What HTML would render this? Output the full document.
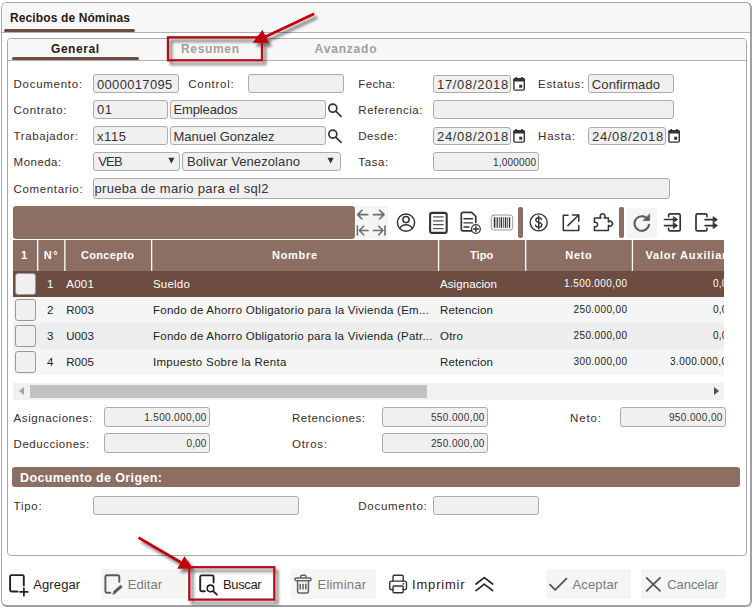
<!DOCTYPE html>
<html><head><meta charset="utf-8"><title>Recibos de Nóminas</title>
<style>
html,body{margin:0;padding:0;}
body{width:754px;height:609px;position:relative;overflow:hidden;background:#fff;font-family:"Liberation Sans",sans-serif;}
.a{position:absolute;box-sizing:border-box;}
.t{position:absolute;white-space:pre;font-family:"Liberation Sans",sans-serif;}
.in{position:absolute;box-sizing:border-box;background:#f0f0f0;border:1px solid #ababab;border-radius:3px;}
.btn{position:absolute;box-sizing:border-box;background:#f5f5f5;border-radius:2px;}
svg{position:absolute;overflow:visible;}
.vd{position:absolute;top:240px;width:2px;height:31px;background:#fff;}

</style></head>
<body>
<!-- outer window -->
<div class="a" style="left:1px;top:2px;width:751px;height:605px;border:1px solid #a8a8a8;border-right:2px solid #a0a0a0;border-bottom:2px solid #a0a0a0;border-radius:6px;background:#fff;"></div>
<div class="a" style="left:2px;top:3px;width:748px;height:29px;background:#f7f7f7;border-radius:5px 5px 0 0;"></div>
<div class="a" style="left:2px;top:32px;width:748px;height:1px;background:#b0b0b0;"></div>
<div class="a" style="left:4px;top:29px;width:131px;height:3px;background:#6d4c41;border-radius:2px;"></div>
<!-- inner panel -->
<div class="a" style="left:7px;top:38px;width:740px;height:518px;border:1px solid #a8a8a8;border-radius:4px;background:#fff;"></div>
<div class="a" style="left:8px;top:39px;width:738px;height:21px;background:#f7f7f7;border-radius:3px 3px 0 0;"></div>
<div class="a" style="left:8px;top:60px;width:738px;height:1px;background:#b0b0b0;"></div>
<div class="a" style="left:12px;top:57px;width:127px;height:3px;background:#6d4c41;border-radius:2px;"></div>

<!-- inputs row1 -->
<div class="in" style="left:93px;top:74px;width:86px;height:19px;"></div>
<div class="in" style="left:248px;top:74px;width:96px;height:19px;"></div>
<div class="in" style="left:433px;top:75px;width:78px;height:18px;"></div>
<div class="in" style="left:588px;top:74px;width:86px;height:19px;"></div>
<!-- row2 -->
<div class="in" style="left:93px;top:100px;width:75px;height:19px;"></div>
<div class="in" style="left:170px;top:100px;width:156px;height:19px;"></div>
<div class="in" style="left:433px;top:100px;width:241px;height:19px;"></div>
<!-- row3 -->
<div class="in" style="left:93px;top:126px;width:75px;height:19px;"></div>
<div class="in" style="left:170px;top:126px;width:156px;height:19px;"></div>
<div class="in" style="left:433px;top:127px;width:78px;height:18px;"></div>
<div class="in" style="left:588px;top:127px;width:78px;height:18px;"></div>
<!-- row4 -->
<div class="in" style="left:93px;top:152px;width:87px;height:19px;"></div>
<div class="in" style="left:182px;top:152px;width:159px;height:19px;"></div>
<div class="in" style="left:433px;top:152px;width:106px;height:19px;"></div>
<!-- row5 -->
<div class="in" style="left:93px;top:178px;width:577px;height:21px;"></div>

<!-- toolbar bar -->
<div class="a" style="left:13px;top:206px;width:342px;height:33px;background:#8d6e63;border-radius:3px;"></div>
<div class="a" style="left:356px;top:206px;width:32px;height:33px;background:#f5f5f5;"></div>
<div class="a" style="left:518px;top:207px;width:5px;height:31px;background:#8d6e63;border-radius:2px;"></div>
<div class="a" style="left:619px;top:207px;width:5px;height:31px;background:#8d6e63;border-radius:2px;"></div>
<div class="a" style="left:627px;top:208px;width:30px;height:30px;background:#f5f5f5;border-radius:2px;"></div>

<!-- table -->
<div class="a" style="left:13px;top:240px;width:711px;height:31px;background:#8d6e63;"></div>
<div class="a" style="left:13px;top:271px;width:711px;height:26px;background:#6d4c41;"></div>
<div class="a" style="left:13px;top:297px;width:711px;height:26px;background:#f5f5f5;"></div>
<div class="a" style="left:13px;top:323px;width:711px;height:26px;background:#eeeeee;"></div>
<div class="a" style="left:13px;top:349px;width:711px;height:26px;background:#f5f5f5;"></div>
<!-- checkboxes -->
<div class="in" style="left:15px;top:273px;width:21px;height:22px;border-color:#999;"></div>
<div class="in" style="left:15px;top:299px;width:21px;height:22px;border-color:#999;"></div>
<div class="in" style="left:15px;top:325px;width:21px;height:22px;border-color:#999;"></div>
<div class="in" style="left:15px;top:351px;width:21px;height:22px;border-color:#999;"></div>
<!-- scrollbar -->
<div class="a" style="left:13px;top:383px;width:711px;height:17px;background:#f1f1f1;"></div>
<div class="a" style="left:30px;top:385px;width:397px;height:13px;background:#c1c1c1;"></div>
<div class="a" style="left:19px;top:387px;width:0;height:0;border:4px solid transparent;border-right:5px solid #a3a3a3;border-left:0;"></div>
<div class="a" style="left:714px;top:387px;width:0;height:0;border:4px solid transparent;border-left:5px solid #505050;border-right:0;"></div>

<!-- totals -->
<div class="in" style="left:104px;top:407px;width:106px;height:20px;"></div>
<div class="in" style="left:104px;top:433px;width:106px;height:20px;"></div>
<div class="in" style="left:382px;top:407px;width:106px;height:20px;"></div>
<div class="in" style="left:382px;top:433px;width:106px;height:20px;"></div>
<div class="in" style="left:620px;top:407px;width:106px;height:20px;"></div>

<!-- section header -->
<div class="a" style="left:12px;top:467px;width:728px;height:20px;background:#8d6e63;border-radius:3px;"></div>
<div class="in" style="left:93px;top:496px;width:206px;height:19px;"></div>
<div class="in" style="left:433px;top:496px;width:106px;height:19px;"></div>

<!-- buttons -->
<div class="btn" style="left:101px;top:569px;width:85px;height:30px;"></div>
<div class="btn" style="left:291px;top:569px;width:85px;height:30px;"></div>
<div class="btn" style="left:546px;top:569px;width:85px;height:30px;"></div>
<div class="btn" style="left:641px;top:569px;width:85px;height:30px;"></div>


<div class="t" style="top:11px;font-size:12px;line-height:15px;color:#2b1a14;letter-spacing:0.116px;font-weight:bold;left:10px;">Recibos de Nóminas</div>
<div class="t" style="top:42px;font-size:12px;line-height:15px;color:#2b1a14;letter-spacing:0.549px;font-weight:bold;left:51px;">General</div>
<div class="t" style="top:42px;font-size:12px;line-height:15px;color:#a59e9e;letter-spacing:0.661px;font-weight:bold;left:181px;">Resumen</div>
<div class="t" style="top:42px;font-size:12px;line-height:15px;color:#a59e9e;letter-spacing:0.824px;font-weight:bold;left:314.6px;">Avanzado</div>
<div class="t" style="top:77px;font-size:11.5px;line-height:14px;color:#3b2b2b;letter-spacing:0.72px;left:13.6px;">Documento:</div>
<div class="t" style="top:77px;font-size:11.5px;line-height:14px;color:#3b2b2b;letter-spacing:0.731px;left:188.3px;">Control:</div>
<div class="t" style="top:77px;font-size:11.5px;line-height:14px;color:#3b2b2b;letter-spacing:0.366px;left:358.3px;">Fecha:</div>
<div class="t" style="top:77px;font-size:11.5px;line-height:14px;color:#3b2b2b;letter-spacing:0.648px;left:538.1px;">Estatus:</div>
<div class="t" style="top:103px;font-size:11.5px;line-height:14px;color:#3b2b2b;letter-spacing:0.698px;left:13.6px;">Contrato:</div>
<div class="t" style="top:103px;font-size:11.5px;line-height:14px;color:#3b2b2b;letter-spacing:0.539px;left:358.3px;">Referencia:</div>
<div class="t" style="top:129px;font-size:11.5px;line-height:14px;color:#3b2b2b;letter-spacing:0.601px;left:13.6px;">Trabajador:</div>
<div class="t" style="top:129px;font-size:11.5px;line-height:14px;color:#3b2b2b;letter-spacing:0.512px;left:358.3px;">Desde:</div>
<div class="t" style="top:129px;font-size:11.5px;line-height:14px;color:#3b2b2b;letter-spacing:0.75px;left:538.1px;">Hasta:</div>
<div class="t" style="top:155px;font-size:11.5px;line-height:14px;color:#3b2b2b;letter-spacing:0.472px;left:13.6px;">Moneda:</div>
<div class="t" style="top:155px;font-size:11.5px;line-height:14px;color:#3b2b2b;letter-spacing:0.625px;left:358.3px;">Tasa:</div>
<div class="t" style="top:182px;font-size:11.5px;line-height:14px;color:#3b2b2b;letter-spacing:0.636px;left:13.6px;">Comentario:</div>
<div class="t" style="top:77px;font-size:13px;line-height:16px;color:#333;letter-spacing:0.332px;left:97px;">0000017095</div>
<div class="t" style="top:77px;font-size:13px;line-height:16px;color:#333;letter-spacing:0.68px;left:437px;">17/08/2018</div>
<div class="t" style="top:77px;font-size:13px;line-height:16px;color:#333;letter-spacing:0.111px;left:591.8px;">Confirmado</div>
<div class="t" style="top:102px;font-size:13px;line-height:16px;color:#333;letter-spacing:0.531px;left:97px;">01</div>
<div class="t" style="top:102px;font-size:13px;line-height:16px;color:#333;letter-spacing:-0.131px;left:173.5px;">Empleados</div>
<div class="t" style="top:129px;font-size:13px;line-height:16px;color:#333;letter-spacing:0.589px;left:97px;">x115</div>
<div class="t" style="top:129px;font-size:13px;line-height:16px;color:#333;letter-spacing:-0.012px;left:173.5px;">Manuel Gonzalez</div>
<div class="t" style="top:129px;font-size:13px;line-height:16px;color:#333;letter-spacing:0.68px;left:437px;">24/08/2018</div>
<div class="t" style="top:129px;font-size:13px;line-height:16px;color:#333;letter-spacing:0.68px;left:592px;">24/08/2018</div>
<div class="t" style="top:154px;font-size:13px;line-height:16px;color:#333;letter-spacing:-0.758px;left:98.2px;">VEB</div>
<div class="t" style="top:154px;font-size:13px;line-height:16px;color:#333;letter-spacing:0.099px;left:187px;">Bolivar Venezolano</div>
<div class="t" style="top:157px;font-size:10px;line-height:12px;color:#333;letter-spacing:0.183px;right:217.82px;">1,000000</div>
<div class="t" style="top:181px;font-size:13px;line-height:16px;color:#333;letter-spacing:0.315px;left:94.5px;">prueba de mario para el sql2</div>
<div class="t" style="top:248px;font-size:11px;line-height:14px;color:#fff;letter-spacing:0px;font-weight:bold;left:20.9px;">1</div>
<div class="t" style="top:248px;font-size:11px;line-height:14px;color:#fff;letter-spacing:1.556px;font-weight:bold;left:43.8px;">N°</div>
<div class="t" style="top:248px;font-size:11px;line-height:14px;color:#fff;letter-spacing:0.309px;font-weight:bold;left:81px;">Concepto</div>
<div class="t" style="top:248px;font-size:11px;line-height:14px;color:#fff;letter-spacing:0.688px;font-weight:bold;left:272px;">Nombre</div>
<div class="t" style="top:248px;font-size:11px;line-height:14px;color:#fff;letter-spacing:0.061px;font-weight:bold;left:470px;">Tipo</div>
<div class="t" style="top:248px;font-size:11px;line-height:14px;color:#fff;letter-spacing:0.682px;font-weight:bold;left:565.3px;">Neto</div>
<div class="t" style="top:248px;font-size:11px;line-height:14px;color:#fff;letter-spacing:0.853px;font-weight:bold;left:645.4px;">Valor Auxiliar</div>
<div class="t" style="top:277px;font-size:11.5px;line-height:14px;color:#fff;letter-spacing:0px;right:700.50px;">1</div>
<div class="t" style="top:277px;font-size:11.5px;line-height:14px;color:#fff;letter-spacing:0.214px;left:66.3px;">A001</div>
<div class="t" style="top:277px;font-size:11.5px;line-height:14px;color:#fff;letter-spacing:0.197px;left:153px;">Sueldo</div>
<div class="t" style="top:277px;font-size:11.5px;line-height:14px;color:#fff;letter-spacing:0.082px;left:440px;">Asignacion</div>
<div class="t" style="top:278px;font-size:10px;line-height:12px;color:#fff;letter-spacing:0.419px;right:126.58px;">1.500.000,00</div>
<div class="t" style="top:278px;font-size:10px;line-height:12px;color:#fff;letter-spacing:0.177px;right:20.82px;">0,00</div>
<div class="t" style="top:303px;font-size:11.5px;line-height:14px;color:#222;letter-spacing:0px;right:700.50px;">2</div>
<div class="t" style="top:303px;font-size:11.5px;line-height:14px;color:#222;letter-spacing:0.0px;left:66.3px;">R003</div>
<div class="t" style="top:303px;font-size:11.5px;line-height:14px;color:#222;letter-spacing:0.244px;left:153px;">Fondo de Ahorro Obligatorio para la Vivienda (Em...</div>
<div class="t" style="top:303px;font-size:11.5px;line-height:14px;color:#222;letter-spacing:0.15px;left:440px;">Retencion</div>
<div class="t" style="top:304px;font-size:10px;line-height:12px;color:#222;letter-spacing:0.382px;right:126.62px;">250.000,00</div>
<div class="t" style="top:304px;font-size:10px;line-height:12px;color:#222;letter-spacing:0.177px;right:20.82px;">0,00</div>
<div class="t" style="top:329px;font-size:11.5px;line-height:14px;color:#222;letter-spacing:0px;right:700.50px;">3</div>
<div class="t" style="top:329px;font-size:11.5px;line-height:14px;color:#222;letter-spacing:0.0px;left:66.3px;">U003</div>
<div class="t" style="top:329px;font-size:11.5px;line-height:14px;color:#222;letter-spacing:0.24px;left:153px;">Fondo de Ahorro Obligatorio para la Vivienda (Patr...</div>
<div class="t" style="top:329px;font-size:11.5px;line-height:14px;color:#222;letter-spacing:0.208px;left:440px;">Otro</div>
<div class="t" style="top:330px;font-size:10px;line-height:12px;color:#222;letter-spacing:0.382px;right:126.62px;">250.000,00</div>
<div class="t" style="top:330px;font-size:10px;line-height:12px;color:#222;letter-spacing:0.177px;right:20.82px;">0,00</div>
<div class="t" style="top:355px;font-size:11.5px;line-height:14px;color:#222;letter-spacing:0px;right:700.50px;">4</div>
<div class="t" style="top:355px;font-size:11.5px;line-height:14px;color:#222;letter-spacing:0.0px;left:66.3px;">R005</div>
<div class="t" style="top:355px;font-size:11.5px;line-height:14px;color:#222;letter-spacing:0.276px;left:153px;">Impuesto Sobre la Renta</div>
<div class="t" style="top:355px;font-size:11.5px;line-height:14px;color:#222;letter-spacing:0.15px;left:440px;">Retencion</div>
<div class="t" style="top:356px;font-size:10px;line-height:12px;color:#222;letter-spacing:0.382px;right:126.62px;">300.000,00</div>
<div class="t" style="top:356px;font-size:10px;line-height:12px;color:#222;letter-spacing:0.419px;right:20.58px;">3.000.000,00</div>
<div class="t" style="top:411px;font-size:11.5px;line-height:14px;color:#3b2b2b;letter-spacing:0.574px;left:13.6px;">Asignaciones:</div>
<div class="t" style="top:437px;font-size:11.5px;line-height:14px;color:#3b2b2b;letter-spacing:0.528px;left:13.6px;">Deducciones:</div>
<div class="t" style="top:411px;font-size:11.5px;line-height:14px;color:#3b2b2b;letter-spacing:0.534px;left:292px;">Retenciones:</div>
<div class="t" style="top:437px;font-size:11.5px;line-height:14px;color:#3b2b2b;letter-spacing:0.738px;left:292px;">Otros:</div>
<div class="t" style="top:411px;font-size:11.5px;line-height:14px;color:#3b2b2b;letter-spacing:0.875px;left:570px;">Neto:</div>
<div class="t" style="top:412px;font-size:10px;line-height:12px;color:#333;letter-spacing:0.346px;right:547.25px;">1.500.000,00</div>
<div class="t" style="top:438px;font-size:10px;line-height:12px;color:#333;letter-spacing:0.177px;right:547.42px;">0,00</div>
<div class="t" style="top:412px;font-size:10px;line-height:12px;color:#333;letter-spacing:0.382px;right:269.22px;">550.000,00</div>
<div class="t" style="top:438px;font-size:10px;line-height:12px;color:#333;letter-spacing:0.382px;right:269.22px;">250.000,00</div>
<div class="t" style="top:412px;font-size:10px;line-height:12px;color:#333;letter-spacing:0.382px;right:31.22px;">950.000,00</div>
<div class="t" style="top:470px;font-size:12.5px;line-height:16px;color:#fff;letter-spacing:0.382px;font-weight:bold;left:20px;">Documento de Origen:</div>
<div class="t" style="top:499px;font-size:11.5px;line-height:14px;color:#3b2b2b;letter-spacing:0.715px;left:13.6px;">Tipo:</div>
<div class="t" style="top:499px;font-size:11.5px;line-height:14px;color:#3b2b2b;letter-spacing:0.72px;left:358.3px;">Documento:</div>
<div class="t" style="top:577px;font-size:13px;line-height:16px;color:#2a1a1a;letter-spacing:0.125px;left:33.2px;">Agregar</div>
<div class="t" style="top:577px;font-size:13px;line-height:16px;color:#7a7a7a;letter-spacing:0.046px;left:127.8px;">Editar</div>
<div class="t" style="top:577px;font-size:13px;line-height:16px;color:#2a1a1a;letter-spacing:-0.374px;left:223px;">Buscar</div>
<div class="t" style="top:577px;font-size:13px;line-height:16px;color:#7a7a7a;letter-spacing:0.219px;left:317.5px;">Eliminar</div>
<div class="t" style="top:577px;font-size:13px;line-height:16px;color:#3a1515;letter-spacing:0.795px;left:412.1px;">Imprimir</div>
<div class="t" style="top:577px;font-size:13px;line-height:16px;color:#7a7a7a;letter-spacing:0.148px;left:572.5px;">Aceptar</div>
<div class="t" style="top:577px;font-size:13px;line-height:16px;color:#7a7a7a;letter-spacing:-0.09px;left:667.3px;">Cancelar</div>
<div class="a" style="left:724px;top:240px;width:22px;height:162px;background:#fff;"></div>

<svg class="a" style="left:0;top:0;" width="754" height="609" viewBox="0 0 754 609" fill="none" stroke-linecap="round" stroke-linejoin="round">
<defs>
<filter id="sh" x="-20%" y="-20%" width="150%" height="160%"><feDropShadow dx="3" dy="3.5" stdDeviation="1.8" flood-color="#000" flood-opacity="0.55"/></filter>
</defs>
<g fill="#fff" stroke="none"><rect x="37" y="240" width="1.3" height="31"/><rect x="64.2" y="240" width="1.3" height="31"/><rect x="151" y="240" width="1.3" height="31"/><rect x="437.9" y="240" width="1.3" height="31"/><rect x="525" y="240" width="1.3" height="31"/><rect x="631.8" y="240" width="1.3" height="31"/></g>
<!-- magnifiers -->
<g stroke="#333" stroke-width="1.7">
<circle cx="332.8" cy="108.2" r="4"/><path d="M335.8 111.2 L341 116.4"/>
<circle cx="332.8" cy="134.1" r="4"/><path d="M335.8 137.1 L341 142.3"/>
</g>
<!-- calendars -->
<g id="cal1" stroke="#333" stroke-width="1.4" stroke-linecap="butt">
<rect x="513.9" y="78.8" width="10.4" height="11.3" rx="1.3"/>
<rect x="513.4" y="78.2" width="11.4" height="3.2" rx="1" fill="#333" stroke="none"/>
<rect x="515.4" y="77" width="1.7" height="2.4" fill="#333" stroke="none"/>
<rect x="521.1" y="77" width="1.7" height="2.4" fill="#333" stroke="none"/>
<rect x="519.2" y="84.7" width="3" height="3" fill="#333" stroke="none"/>
</g>
<use href="#cal1" y="52"/>
<use href="#cal1" x="155" y="52"/>
<!-- select arrows -->
<path d="M168.3 157.8 H174.5 L171.4 163.4 Z" fill="#333" stroke="none"/>
<path d="M327.5 157.8 H333.7 L330.6 163.4 Z" fill="#333" stroke="none"/>

<!-- toolbar: 4 arrows -->
<g stroke="#6c6c6c" stroke-width="1.6">
<path d="M357.6 214.6 H367.8 M362 210.2 L357.6 214.6 L362 219"/>
<path d="M373.4 214.6 H384 M379.6 210.2 L384 214.6 L379.6 219"/>
<path d="M357.4 226 V235 M359.4 230.5 H368 M363.6 226.2 L359.4 230.5 L363.6 234.8"/>
<path d="M385 226 V235 M373.4 230.5 H383 M378.8 226.2 L383 230.5 L378.8 234.8"/>
</g>
<!-- user -->
<g stroke="#333" stroke-width="1.5">
<circle cx="406" cy="222.6" r="8.6"/>
<circle cx="406" cy="219.6" r="3.1"/>
<path d="M399.6 228.3 C401.5 225.6 403.5 224.8 406 224.8 C408.5 224.8 410.5 225.6 412.4 228.3"/>
</g>
<!-- document -->
<g stroke="#333">
<rect x="430.1" y="212.9" width="16.6" height="20" rx="2" stroke-width="2.1"/>
<path d="M433.5 216.8 H443.3 M433.5 220.8 H443.3 M433.5 224.7 H443.3 M433.5 228.6 H443.3" stroke-width="1.2" stroke="#555"/>
</g>
<!-- doc plus -->
<g stroke="#333" stroke-width="1.7">
<path d="M471.5 230.8 H463 Q461.3 230.8 461.3 229.1 V214 Q461.3 212.3 463 212.3 H471.6 L475.8 216.5 V222.5"/>
<path d="M464 218.8 H472.6 M464 222.9 H472.6 M464 227 H469" stroke-width="1.4"/>
<circle cx="475.9" cy="229" r="4.4" fill="#fff" stroke-width="1.3"/>
<path d="M473.4 229 H478.4 M475.9 226.5 V231.5" stroke-width="1.4"/>
</g>
<!-- barcode -->
<g>
<rect x="491.3" y="215" width="21.4" height="15" rx="2.5" stroke="#9a9a9a" stroke-width="1" fill="#fafafa"/>
<g stroke="#333" stroke-linecap="butt">
<path d="M494.6 217.2 V227.8" stroke-width="1.6"/>
<path d="M497.2 217.2 V227.8" stroke-width="1.2"/>
<path d="M499.3 217.2 V227.8" stroke-width="0.8"/>
<path d="M501.4 217.2 V227.8" stroke-width="1.5"/>
<path d="M503.6 217.2 V227.8" stroke-width="0.8"/>
<path d="M505.6 217.2 V227.8" stroke-width="1.4"/>
<path d="M507.7 217.2 V227.8" stroke-width="0.8"/>
<path d="M509.6 217.2 V227.8" stroke-width="1.2"/>
</g>
</g>
<!-- dollar -->
<g stroke="#333" stroke-width="1.4">
<circle cx="538.7" cy="222.4" r="8.5"/>
<path d="M541.6 219.6 C541 218.2 539.9 217.7 538.6 217.7 C536.9 217.7 535.8 218.6 535.8 219.9 C535.8 221.3 537 221.9 538.7 222.3 C540.5 222.8 541.8 223.4 541.8 224.9 C541.8 226.3 540.5 227.2 538.7 227.2 C537.1 227.2 535.9 226.5 535.5 225.1 M538.7 216 V229"/>
</g>
<!-- external link -->
<g stroke="#333" stroke-width="1.5">
<path d="M568 215.2 H563.3 V230.4 H578.8 V225.5"/>
<path d="M567.8 225.6 L578.8 215 M572.5 215 H578.8 V221.3"/>
</g>
<!-- puzzle -->
<g stroke="#333" stroke-width="1.5">
<path d="M601 218 A2.4 2.4 0 1 1 604.2 218 H608.4 V222 A2.4 2.4 0 1 1 608.4 225.4 V230.6 H594.4 V226.6 A2.3 2.3 0 1 0 594.4 222.4 V218 Z"/>
</g>
<!-- refresh -->
<g stroke="#5a5a5a" stroke-width="2">
<path d="M648 219.6 A7.3 7.3 0 1 0 649 224.8"/>
<path d="M649.6 214.2 V220.6 H643.2 Z" fill="#5a5a5a" stroke-width="0.6"/>
</g>
<!-- import -->
<g stroke="#333" stroke-width="1.7">
<path d="M668.6 216.6 V215.4 Q668.6 213.9 670.1 213.9 H678.7 Q680.2 213.9 680.2 215.4 V229.4 Q680.2 230.9 678.7 230.9 H670.1 Q668.6 230.9 668.6 229.4 V228.4"/>
<path d="M664.4 219.5 H674 M664.4 225.6 H674" stroke-width="1.6"/>
<path d="M673.6 216.7 L677.6 219.5 L673.6 222.3 Z M673.6 222.8 L677.6 225.6 L673.6 228.4 Z" fill="#333" stroke-width="0.8"/>
</g>
<!-- export -->
<g stroke="#333" stroke-width="1.7">
<path d="M707 216.6 V215.4 Q707 213.9 705.5 213.9 H697.5 Q696 213.9 696 215.4 V229.4 Q696 230.9 697.5 230.9 H705.5 Q707 230.9 707 229.4 V228.4"/>
<path d="M705 219.6 H714 M705 225.6 H714" stroke-width="1.6"/>
<path d="M713.4 216.8 L717.4 219.6 L713.4 222.4 Z M713.4 222.8 L717.4 225.6 L713.4 228.4 Z" fill="#333" stroke-width="0.8"/>
</g>

<!-- bottom buttons -->
<!-- agregar -->
<g stroke="#222" stroke-width="1.9">
<path d="M23.8 585.4 V576.6 Q23.8 575.1 22.3 575.1 H11.6 Q10.1 575.1 10.1 576.6 V590 Q10.1 591.5 11.6 591.5 H17.6"/>
<path d="M20 591.9 H27.8 M23.9 588.1 V595.7" stroke-width="1.7"/>
</g>
<!-- editar -->
<g stroke="#5a5a5a" stroke-width="1.9">
<path d="M119.3 581.8 V576.7 Q119.3 575.2 117.8 575.2 H106.9 Q105.4 575.2 105.4 576.7 V591.2 Q105.4 592.7 106.9 592.7 H110.3"/>
<path d="M114.3 592.4 L121.6 585.8" stroke-width="3" stroke-linecap="butt"/>
<path d="M112.9 594 L113.6 591.6 L115.4 593.3 Z" fill="#5a5a5a" stroke-width="0.6"/>
</g>
<!-- buscar -->
<g stroke="#222" stroke-width="1.9">
<path d="M213.6 582.6 V576.9 Q213.6 575.4 212.1 575.4 H201.7 Q200.2 575.4 200.2 576.9 V589.7 Q200.2 591.2 201.7 591.2 H204.8"/>
<circle cx="210.5" cy="588.4" r="3.3" stroke-width="1.6"/>
<path d="M213 591 L216.9 594.7" stroke-width="1.8"/>
</g>
<!-- eliminar -->
<g stroke="#616161" stroke-width="1.5">
<rect x="294.9" y="578" width="16.2" height="2.7" rx="1.35"/>
<path d="M300.7 577.6 V576.4 Q300.7 575.2 301.9 575.2 H304.8 Q306 575.2 306 576.4 V577.6"/>
<path d="M297.6 581.5 V591.4 Q297.6 592.9 299.1 592.9 H306.9 Q308.4 592.9 308.4 591.4 V581.5"/>
<path d="M300.2 583.8 V589.4 M303 583.8 V589.4 M305.8 583.8 V589.4" stroke-width="1.5" stroke-linecap="butt"/>
</g>
<!-- imprimir -->
<g stroke="#333" stroke-width="1.4">
<path d="M393 581 V576.5 Q393 575.2 394.3 575.2 H401.9 Q403.2 575.2 403.2 576.5 V581"/>
<path d="M393 589.6 H391.6 Q389.7 589.6 389.7 587.7 V583 Q389.7 581.1 391.6 581.1 H404.6 Q406.5 581.1 406.5 583 V587.7 Q406.5 589.6 404.6 589.6 H403.2"/>
<rect x="393" y="586" width="10.2" height="6.8" rx="1"/>
<path d="M403.4 583.9 H403.6" stroke-width="1.6"/>
</g>
<!-- chevrons -->
<g stroke="#222" stroke-width="1.7">
<path d="M476 584 L484.3 577.6 L492.6 584"/>
<path d="M476 590.6 L484.3 584.2 L492.6 590.6"/>
</g>
<!-- aceptar check -->
<path d="M550 584.6 L555.2 589.8 L566.4 578.6" stroke="#555" stroke-width="1.8"/>
<!-- cancelar x -->
<path d="M646.6 577.8 L660 590.8 M660 577.8 L646.6 590.8" stroke="#555" stroke-width="1.8"/>

<!-- red arrows -->
<g filter="url(#sh)">
<rect x="168" y="37.3" width="94" height="23" stroke="#b3101c" stroke-width="2.3" stroke-linejoin="miter"/>
<rect x="189.3" y="567.2" width="85" height="32.4" stroke="#b3101c" stroke-width="2.3" stroke-linejoin="miter"/>
<path d="M314.2 13.8 L265.5 36.8" stroke="#c00010" stroke-width="2.8" stroke-linecap="butt"/>
<path d="M262.4 30 L269 43 L252.6 42.8 Z" fill="#c00010" stroke="none"/>
<path d="M138.5 537.6 L181 562.5" stroke="#c00010" stroke-width="2.8" stroke-linecap="butt"/>
<path d="M184.4 556.2 L177.2 568.8 L193 568.6 Z" fill="#c00010" stroke="none"/>
</g>
</svg>

</body></html>
